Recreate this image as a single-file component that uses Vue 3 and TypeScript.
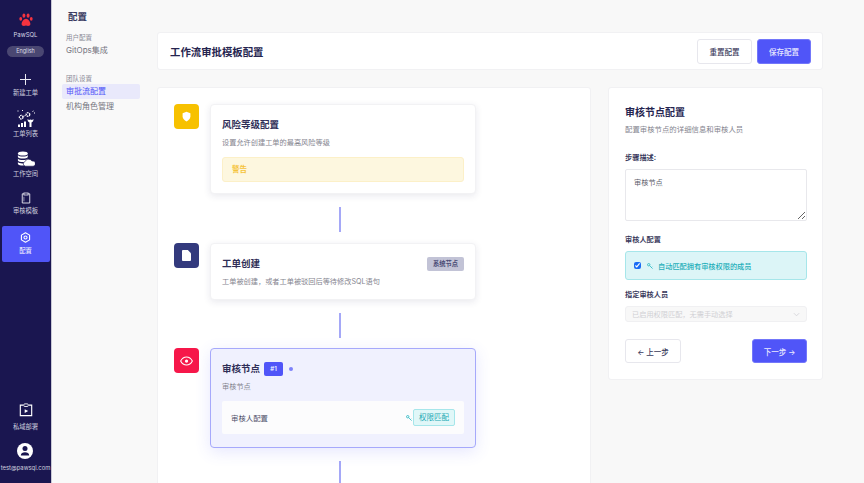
<script setup lang="ts">
const navItems = [
  { label: '新建工单', key: 'plus' },
  { label: '工单列表', key: 'list' },
  { label: '工作空间', key: 'space' },
  { label: '审核模板', key: 'clip' },
  { label: '配置', key: 'gear' }
]
</script>

<template>
  <div class="app">
    <aside class="rail">
      <div class="brand">
        <svg class="paw" viewBox="0 0 16 15" width="14" height="14">
          <ellipse cx="2" cy="6.2" rx="1.6" ry="2.2" fill="#f5333f" />
          <ellipse cx="5.6" cy="2.6" rx="1.7" ry="2.4" fill="#f5333f" />
          <ellipse cx="10.4" cy="2.6" rx="1.7" ry="2.4" fill="#f5333f" />
          <ellipse cx="14" cy="6.2" rx="1.6" ry="2.2" fill="#f5333f" />
          <path d="M8 6c2.4 0 5 3.4 5 6 0 2.4-2.6 2.6-5 1.8C5.600 14.600 3 14.400 3 12c0-2.600 2.600-6 5-6z" fill="#f5333f" />
        </svg>
        <span class="brand-name">PawSQL</span>
        <span class="lang">English</span>
      </div>

      <nav class="nav">
        <a v-for="item in navItems" :key="item.key" class="nav-item" :class="[item.key, { active: item.key === 'gear' }]">
          <svg v-if="item.key === 'plus'" viewBox="0 0 12 12" width="11" height="11">
            <path d="M6 0v12M0 6h12" stroke="#e9e9f2" stroke-width="1.100" fill="none" />
          </svg>
          <svg v-else-if="item.key === 'list'" viewBox="0 0 18 17" width="18" height="17">
            <circle cx="4.200" cy="7.200" r="1.800" fill="none" stroke="#fff" stroke-width="1.300" stroke-dasharray="1.500 .7" />
            <circle cx="11" cy="4.500" r="1.800" fill="none" stroke="#fff" stroke-width="1.300" stroke-dasharray="1.500 .7" />
            <path d="M6 6.500l3.200-1.300" stroke="#fff" stroke-width=".6" />
            <path d="M.5 1h1M5 .5h1M15.500 1.500l1-.5M17 3h1" stroke="#fff" stroke-width="1" />
            <path d="M2 17v-2.500M5 17v-4M8 17v-5.500" stroke="#fff" stroke-width="2" />
            <path d="M10.500 9c0 2.200 1 3 2 3.500V17h2v-4.500c1-.5 2-1.300 2-3.500L15 10l-1.500-.5L12 10z" fill="#fff" />
          </svg>
          <svg v-else-if="item.key === 'space'" viewBox="0 0 20 20" width="18" height="16" preserveAspectRatio="none">
            <ellipse cx="6.500" cy="3" rx="5.500" ry="2.500" fill="#fff" />
            <path d="M1 5c1 2.500 10 2.500 11 0v2.500c-1 2.500-10 2.500-11 0z" fill="#fff" />
            <path d="M1 9.300c1 2.500 10 2.500 11 0v2.700c-1 2.500-10 2.500-11 0z" fill="#fff" />
            <path d="M1 13.700c1 1.800 5 2.200 7 1.500l-.5 2.800c-2.500.3-5.500-.3-6.500-1.800z" fill="#fff" />
            <path d="M9.500 19a3 3 0 0 1-.5-5.800 4 4 0 0 1 7.500-.7 3.300 3.300 0 0 1 1.500 6.500z" fill="#fff" stroke="#1a1650" stroke-width=".7" />
          </svg>
          <svg v-else-if="item.key === 'clip'" viewBox="0 0 12 14" width="10" height="12">
            <path d="M3.500 2H1.500v11h9V2H8.500" fill="none" stroke="#e9e9f2" stroke-width="1.100" />
            <rect x="3.500" y="1" width="5" height="2.400" fill="none" stroke="#e9e9f2" stroke-width="1" />
            <path d="M3.500 5.500v5.500" stroke="#e9e9f2" stroke-width=".7" />
          </svg>
          <svg v-else viewBox="0 0 14 14" width="11" height="11">
            <path d="M7 1l5.200 3v6L7 13l-5.200-3V4z" fill="none" stroke="#fff" stroke-width="1.400" stroke-linejoin="round" />
            <circle cx="7" cy="7" r="2" fill="none" stroke="#fff" stroke-width="1.300" />
          </svg>
          <span>{{ item.label }}</span>
        </a>
      </nav>

      <div class="rail-foot">
        <a class="nav-item deploy">
          <svg viewBox="0 0 16 16" width="14" height="14">
            <path d="M5 2.500H1.500v12h13v-12H11" fill="none" stroke="#fff" stroke-width="1.300" />
            <rect x="5.500" y="1" width="5" height="3" rx="1" fill="none" stroke="#fff" stroke-width="1" />
            <path d="M6.500 7v4.500L10.500 9.200z" fill="#fff" />
          </svg>
          <span>私域部署</span>
        </a>
        <a class="nav-item user">
          <svg viewBox="0 0 16 16" width="16" height="16">
            <circle cx="8" cy="8" r="8" fill="#fff" />
            <circle cx="8" cy="5.600" r="2.500" fill="#1a1650" />
            <path d="M3.800 12.500c0-2.200 2-3.300 4.200-3.300s4.200 1.100 4.200 3.300z" fill="#1a1650" />
          </svg>
          <span class="email">test@pawsql.com</span>
        </a>
      </div>
    </aside>

    <aside class="sub">
      <h2 class="sub-title">配置</h2>
      <div class="sub-group">
        <p class="sub-label">用户配置</p>
        <a class="sub-link">GitOps集成</a>
      </div>
      <div class="sub-group">
        <p class="sub-label">团队设置</p>
        <a class="sub-link current">审批流配置</a>
        <a class="sub-link">机构角色管理</a>
      </div>
    </aside>

    <main class="main">
      <header class="topbar">
        <h1>工作流审批模板配置</h1>
        <div class="top-actions">
          <button class="btn ghost">重置配置</button>
          <button class="btn primary">保存配置</button>
        </div>
      </header>

      <div class="columns">
        <section class="flow">
          <div class="step">
            <span class="step-icon yellow">
              <svg viewBox="0 0 12 14" width="9" height="11">
                <path d="M6 .5l5.200 2v4.300c0 3.200-2.300 5.500-5.200 6.700C3.100 12.300.8 10 .8 6.800V2.500z" fill="#fff" />
              </svg>
            </span>
            <div class="node risk-node">
              <h3>风险等级配置</h3>
              <p class="node-desc">设置允许创建工单的最高风险等级</p>
              <div class="risk">警告</div>
            </div>
          </div>
          <div class="line"></div>

          <div class="step">
            <span class="step-icon navy">
              <svg viewBox="0 0 10 12" width="9" height="11">
                <path d="M1 0h5.500L10 3.500V11a1 1 0 0 1-1 1H1a1 1 0 0 1-1-1V1a1 1 0 0 1 1-1z" fill="#fff" />
              </svg>
            </span>
            <div class="node create-node">
              <div class="node-head">
                <h3>工单创建</h3>
                <span class="sys-tag">系统节点</span>
              </div>
              <p class="node-desc">工单被创建，或者工单被驳回后等待修改SQL语句</p>
            </div>
          </div>
          <div class="line tight"></div>

          <div class="step review">
            <span class="step-icon red">
              <svg viewBox="0 0 16 12" width="13" height="10">
                <path d="M.8 6C2.500 2.700 5 1 8 1s5.500 1.700 7.200 5C13.500 9.300 11 11 8 11S2.500 9.300.8 6z" fill="none" stroke="#fff" stroke-width="1.300" />
                <circle cx="8" cy="6" r="2" fill="#fff" />
              </svg>
            </span>
            <div class="node selected">
              <div class="title-row">
                <h3>审核节点</h3>
                <span class="num">#1</span>
                <span class="dot"></span>
              </div>
              <p class="node-desc">审核节点</p>
              <div class="approver">
                <span>审核人配置</span>
                <div class="approver-right">
                  <svg class="key" viewBox="0 0 8 8" width="6" height="6">
                    <circle cx="2.300" cy="2.300" r="1.600" fill="none" stroke="#23b5c0" stroke-width="1.100" />
                    <path d="M3.500 3.500L7.500 7.500M6 6l1-1" stroke="#23b5c0" stroke-width="1" />
                  </svg>
                  <span class="perm">权限匹配</span>
                </div>
              </div>
            </div>
          </div>
          <div class="line"></div>
        </section>

        <section class="panel">
          <h2>审核节点配置</h2>
          <p class="panel-desc">配置审核节点的详细信息和审核人员</p>

          <label class="field-label first">步骤描述:</label>
          <textarea class="area" readonly>审核节点</textarea>

          <label class="field-label cfg">审核人配置</label>
          <div class="auto">
            <input type="checkbox" checked />
            <svg viewBox="0 0 8 8" width="6" height="6">
              <circle cx="2.300" cy="2.300" r="1.600" fill="none" stroke="#23b5c0" stroke-width="1.100" />
              <path d="M3.500 3.500L7.500 7.500M6 6l1-1" stroke="#23b5c0" stroke-width="1" />
            </svg>
            <span>自动匹配拥有审核权限的成员</span>
          </div>

          <label class="field-label who">指定审核人员</label>
          <div class="select">
            <span>已启用权限匹配，无需手动选择</span>
            <svg viewBox="0 0 8 5" width="7" height="5">
              <path d="M1 1l3 3 3-3" fill="none" stroke="#d5d5d9" stroke-width="1" />
            </svg>
          </div>

          <div class="panel-actions">
            <button class="btn ghost step-btn">← 上一步</button>
            <button class="btn primary step-btn next">下一步 →</button>
          </div>
        </section>
      </div>
    </main>
  </div>
</template>

<style>
html,
body {
  margin: 0;
  height: 100%;
  overflow: hidden;
}
</style>

<style scoped>
.app {
  display: flex;
  height: 483px;
  overflow: hidden;
  background: #f8f8f8;
  font-family: Inter, "Noto Sans CJK SC", sans-serif;
  color: #25244f;
}
.rail {
  width: 52px;
  flex: none;
  box-sizing: border-box;
  background: #1a1650;
  border-right: 1px solid #c9c9d6;
  display: flex;
  flex-direction: column;
  align-items: center;
  padding-top: 13px;
}
.brand {
  display: flex;
  flex-direction: column;
  align-items: center;
}
.brand-name {
  margin-top: 3px;
  font-size: 6px;
  line-height: 10px;
  color: #d8d8e6;
}
.lang {
  margin-top: 6px;
  width: 37px;
  height: 11px;
  border-radius: 6px;
  background: #4a4772;
  color: #dcdce8;
  font-size: 5.500px;
  line-height: 11px;
  text-align: center;
}
.nav {
  display: flex;
  flex-direction: column;
  align-items: center;
  width: 100%;
}
.nav-item {
  display: flex;
  flex-direction: column;
  align-items: center;
  color: #cfcfdf;
  font-size: 6.300px;
  line-height: 9px;
  white-space: nowrap;
}
.nav-item.plus { margin-top: 17px; }
.nav-item.plus span { margin-top: 4px; }
.nav-item.list { margin-top: 12px; }
.nav-item.list span { margin-top: 3px; }
.nav-item.space { margin-top: 12px; }
.nav-item.space span { margin-top: 3px; }
.nav-item.clip { margin-top: 13px; }
.nav-item.clip span { margin-top: 3px; }
.nav-item.gear {
  box-sizing: border-box;
  width: 48px;
  height: 36px;
  margin-top: 10px;
  padding-top: 6px;
  border-radius: 2px;
  background: #5055f8;
  color: #fff;
}
.nav-item.gear span { margin-top: 4px; }
.rail-foot {
  margin-top: auto;
  width: 100%;
  display: flex;
  flex-direction: column;
  align-items: center;
  padding-bottom: 11.500px;
}
.deploy span { margin-top: 5.500px; }
.user { margin-top: 11.500px; }
.user span { margin-top: 3.500px; }
.email { font-size: 5.900px; }

.sub {
  width: 98px;
  flex: none;
  box-sizing: border-box;
  padding: 10px 10px 0 10px;
  background: #f9f9f9;
}
.sub-title {
  margin: 0 0 0 6px;
  font-size: 9.500px;
  line-height: 13px;
  font-weight: 700;
  color: #3a3a60;
}
.sub-group {
  margin-top: 11px;
  display: flex;
  flex-direction: column;
}
.sub-group + .sub-group { margin-top: 17px; }
.sub-label {
  margin: 0 0 0 4px;
  font-size: 6.500px;
  line-height: 9px;
  color: #8b8b98;
}
.sub-link {
  padding: 0 4px;
  font-size: 8px;
  line-height: 14.500px;
  color: #75757f;
  border-radius: 2px;
}
.sub-link.current {
  line-height: 15px;
  background: #e9e9fb;
  color: #5055f8;
}

.main {
  flex: 1;
  min-width: 0;
  box-sizing: border-box;
  padding: 32px 41px 0 7px;
}
.topbar {
  height: 38px;
  box-sizing: border-box;
  display: flex;
  align-items: center;
  justify-content: space-between;
  padding: 0 11px 0 12px;
  background: #fff;
  border: 1px solid #f1f1f3;
  border-radius: 3px;
}
.topbar h1 {
  margin: 0;
  font-size: 10.400px;
  font-weight: 700;
  color: #25244f;
}
.top-actions {
  display: flex;
  gap: 5px;
}
.btn {
  box-sizing: border-box;
  height: 25px;
  width: 55px;
  padding: 0;
  border-radius: 3px;
  font-family: inherit;
  font-size: 7.500px;
  font-weight: 500;
}
.btn.primary { width: 54px; }
.btn.ghost {
  background: #fff;
  border: 1px solid #e7e7ed;
  color: #3a3a5c;
}
.btn.primary {
  background: #5055f8;
  border: 1px solid #7377fa;
  color: #e9e9ff;
}
.columns {
  display: flex;
  align-items: flex-start;
  gap: 17px;
  margin-top: 17px;
}
.flow {
  width: 434px;
  height: 420px;
  flex: none;
  box-sizing: border-box;
  padding: 16px 16px 0 16px;
  background: #fff;
  border: 1px solid #f1f1f3;
  border-radius: 3px;
}
.step {
  display: flex;
  align-items: flex-start;
  gap: 11px;
}
.step-icon {
  flex: none;
  width: 25px;
  height: 25px;
  border-radius: 4px;
  display: flex;
  align-items: center;
  justify-content: center;
}
.yellow { background: #f7c100; }
.navy { background: #333a7d; }
.red { background: #f6174a; }
.node {
  width: 266px;
  box-sizing: border-box;
  padding: 13px 11px 0;
  background: #fff;
  border: 1px solid #f2f2f4;
  border-radius: 4px;
  box-shadow: 0 2px 7px rgba(40, 40, 90, 0.1);
}
.risk-node { height: 90px; }
.create-node { height: 57px; }
.node h3 {
  margin: 0;
  font-size: 9.500px;
  line-height: 14px;
  font-weight: 700;
  color: #2f2e57;
}
.node-desc {
  margin: 5px 0 0;
  font-size: 7.200px;
  line-height: 11px;
  color: #85858f;
}
.risk {
  margin-top: 9px;
  height: 25px;
  box-sizing: border-box;
  padding-left: 9px;
  background: #fdf7df;
  border: 1px solid #fcf0c8;
  border-radius: 3px;
  font-size: 7.500px;
  line-height: 23px;
  font-weight: 700;
  color: #f5c33b;
}
.node-head {
  display: flex;
  align-items: center;
  justify-content: space-between;
  height: 14px;
}
.sys-tag {
  width: 37px;
  height: 14px;
  border-radius: 2px;
  background: #c2c3d6;
  color: #4a4b75;
  font-size: 6.300px;
  font-weight: 700;
  line-height: 14px;
  text-align: center;
}
.line {
  width: 1.500px;
  height: 25px;
  margin: 13px 0 11px 165px;
  background: #a5a8f7;
}
.line.tight { margin-bottom: 10px; }
.node.selected {
  height: 100px;
  background: #f0f1fe;
  border: 1px solid #a6a9fb;
  box-shadow: 0 4px 16px rgba(80, 85, 248, 0.14);
}
.title-row {
  display: flex;
  align-items: center;
  height: 14px;
}
.num {
  margin-left: 4px;
  width: 19px;
  height: 14px;
  border-radius: 2px;
  background: #5055f8;
  color: #dfe0ff;
  font-size: 6px;
  line-height: 14px;
  font-weight: 700;
  text-align: center;
}
.dot {
  margin-left: 6px;
  width: 4px;
  height: 4px;
  border-radius: 50%;
  background: #7d81fa;
}
.approver {
  margin-top: 9px;
  height: 33px;
  box-sizing: border-box;
  padding: 0 9px 0 9px;
  display: flex;
  align-items: center;
  justify-content: space-between;
  background: #fcfcfd;
  border-radius: 2px;
  font-size: 7.400px;
  color: #50506a;
}
.approver-right {
  display: flex;
  align-items: center;
  gap: 1px;
}
.perm {
  box-sizing: border-box;
  width: 42px;
  height: 17px;
  border: 1px solid #a6e6ea;
  border-radius: 2px;
  background: #e0f7f8;
  color: #22a9b4;
  font-size: 7.500px;
  line-height: 15px;
  text-align: center;
}
.panel {
  width: 215px;
  height: 293px;
  flex: none;
  box-sizing: border-box;
  padding: 17px 16px 0;
  background: #fff;
  border: 1px solid #f1f1f3;
  border-radius: 3px;
}
.panel h2 {
  margin: 0;
  font-size: 10px;
  line-height: 14px;
  font-weight: 700;
  color: #25244f;
}
.panel-desc {
  margin: 5px 0 0;
  font-size: 7.400px;
  line-height: 11px;
  color: #85858f;
}
.field-label {
  display: block;
  font-size: 7.200px;
  line-height: 11px;
  font-weight: 700;
  color: #3a3a5c;
}
.field-label.first { margin-top: 17px; }
.field-label.cfg { margin-top: 13px; }
.field-label.who { margin-top: 9px; }
.area {
  display: block;
  box-sizing: border-box;
  width: 182px;
  height: 52px;
  margin-top: 6px;
  padding: 7px 8px;
  border: 1px solid #e8e8ec;
  border-radius: 2px;
  outline: none;
  font-family: inherit;
  font-size: 7.200px;
  line-height: 12px;
  color: #60606c;
}
.auto {
  box-sizing: border-box;
  width: 182px;
  height: 29px;
  margin-top: 6px;
  padding-left: 8px;
  display: flex;
  align-items: center;
  gap: 3px;
  background: #dcf5f7;
  border: 1px solid #a6e6ea;
  border-radius: 3px;
  color: #23aeb9;
  font-size: 7.200px;
  font-weight: 500;
}
.auto input {
  width: 7px;
  height: 7px;
  margin: 0 3px 0 0;
  accent-color: #1a6cf5;
}
.auto span { margin-left: 2px; }
.select {
  box-sizing: border-box;
  width: 182px;
  height: 16px;
  margin-top: 6px;
  padding: 0 6px;
  display: flex;
  align-items: center;
  justify-content: space-between;
  background: #f8f8f8;
  border: 1px solid #f0f0f2;
  border-radius: 3px;
  color: #d0d0d4;
  font-size: 7.200px;
}
.panel-actions {
  display: flex;
  justify-content: space-between;
  width: 182px;
  margin-top: 17px;
}
.step-btn {
  width: 56px;
  height: 24px;
}
.step-btn.next { width: 55px; }
</style>
